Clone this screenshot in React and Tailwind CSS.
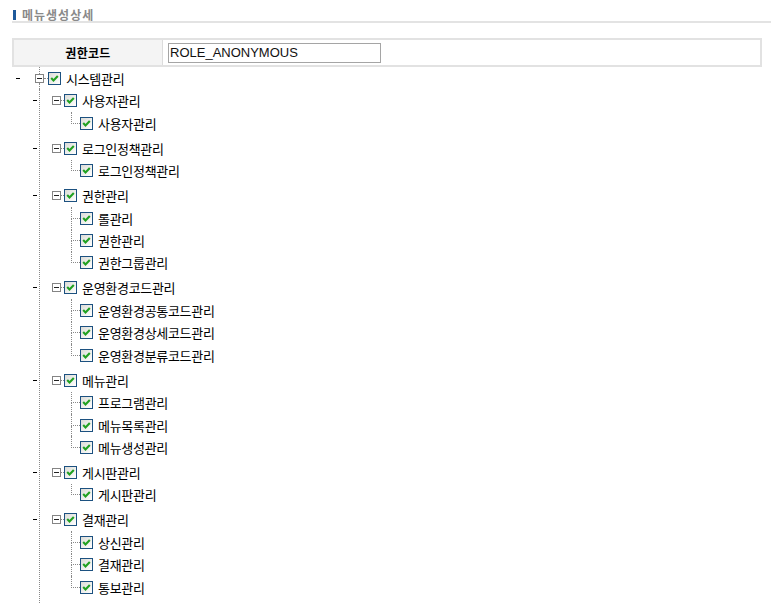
import React from "react";

const menuTree = [
  { label: "사용자관리", children: ["사용자관리"] },
  { label: "로그인정책관리", children: ["로그인정책관리"] },
  { label: "권한관리", children: ["롤관리", "권한관리", "권한그룹관리"] },
  {
    label: "운영환경코드관리",
    children: ["운영환경공통코드관리", "운영환경상세코드관리", "운영환경분류코드관리"],
  },
  { label: "메뉴관리", children: ["프로그램관리", "메뉴목록관리", "메뉴생성관리"] },
  { label: "게시판관리", children: ["게시판관리"] },
  { label: "결재관리", children: ["상신관리", "결재관리", "통보관리"] },
];

function Toggle() {
  return (
    <span className="w-[9px] h-[9px] shrink-0 border border-[#848484] bg-white flex items-center justify-center">
      <span className="w-[5px] h-px bg-[#222]" />
    </span>
  );
}

function Check() {
  return (
    <span className="w-[13px] h-[13px] shrink-0 border border-[#1c5180] bg-linear-to-br from-[#dcdcd7] to-white flex">
      <svg width="11" height="11" viewBox="0 0 11 11">
        <polyline
          points="2.2,5 4.5,7.4 8.8,3"
          fill="none"
          stroke="#21a121"
          strokeWidth="2.1"
        />
      </svg>
    </span>
  );
}

function Dash() {
  return <span className="w-[4px] h-px bg-black shrink-0" />;
}

// vertical + horizontal tree line in front of a leaf
function Elbow({ last }) {
  return (
    <span className="self-stretch w-[9px] shrink-0 flex flex-col">
      <span className="flex-1 border-l border-b border-dotted border-[#888]" />
      <span
        className={
          last ? "flex-1" : "flex-1 border-l border-dotted border-[#888]"
        }
      />
    </span>
  );
}

function Label({ children }) {
  return (
    <span className="ml-[5px] text-[13px] leading-[13px] tracking-[-0.3px] text-black whitespace-nowrap">
      {children}
    </span>
  );
}

function Group({ item }) {
  return (
    <li className="mb-[2.3px]">
      <div className="flex items-center h-[23px]">
        <span className="-ml-[7px] flex">
          <Dash />
        </span>
        <span className="ml-[15px] flex">
          <Toggle />
        </span>
        <span className="w-[3px] border-t border-dotted border-[#888]" />
        <Check />
        <Label>{item.label}</Label>
      </div>
      <ul className="ml-[31px]">
        {item.children.map((child, i) => (
          <li key={i} className="flex items-center h-[22.3px]">
            <Elbow last={i === item.children.length - 1} />
            <Check />
            <Label>{child}</Label>
          </li>
        ))}
      </ul>
    </li>
  );
}

export default function App() {
  return (
    <div className="h-[603px] overflow-hidden bg-white font-['Noto_Sans_CJK_KR','Noto_Sans',sans-serif]">
      <div className="pl-[12px] pr-[8px]">
        <div className="mt-[8px] h-[13px] flex items-center">
          <span className="ml-[1px] w-[3px] h-[10px] bg-[#1f5a9b]" />
          <span className="ml-[6px] text-[12px] leading-[12px] font-bold text-[#8a8a8a] tracking-[1px]">
            메뉴생성상세
          </span>
        </div>
        <div className="h-[2px] bg-[#e3e3e3]" />

        <div className="mt-[15px] w-[750px] h-[29px] border-2 border-[#e2e2e2] flex">
          <div className="w-[149px] bg-[#f4f4f4] border-r border-[#dcdcdc] flex items-center justify-center">
            <span className="text-[12px] leading-[12px] font-bold text-black tracking-[0.3px]">권한코드</span>
          </div>
          <div className="flex-1 flex items-center pl-[5px]">
            <input
              type="text"
              readOnly
              value="ROLE_ANONYMOUS"
              className="w-[213px] h-[20px] border border-[#a5a5a5] px-[1px] text-[13px] text-[#111] outline-none font-['Liberation_Sans',Arial,sans-serif]"
            />
          </div>
        </div>
      </div>

      <ul>
        <li>
          <div className="flex items-center h-[22px]">
            <span className="ml-[16px] flex">
              <Dash />
            </span>
            <span className="ml-[15px] self-stretch w-[9px] flex flex-col items-center">
              <span className="flex-1 border-l border-dotted border-[#888]" />
              <Toggle />
              <span className="flex-1 border-l border-dotted border-[#888]" />
            </span>
            <span className="w-[4px] border-t border-dotted border-[#888]" />
            <Check />
            <Label>시스템관리</Label>
          </div>
          <ul className="ml-[39px] border-l border-dotted border-[#888] pb-[20px]">
            {menuTree.map((item, i) => (
              <Group key={i} item={item} />
            ))}
          </ul>
        </li>
      </ul>
    </div>
  );
}
